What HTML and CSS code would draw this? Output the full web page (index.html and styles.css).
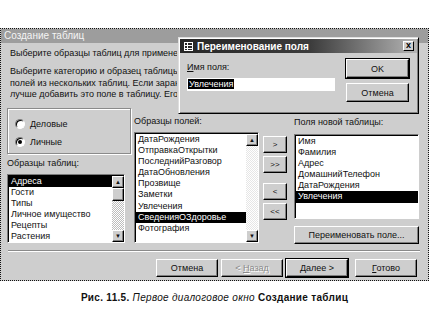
FILE: index.html
```html
<!DOCTYPE html>
<html lang="ru">
<head>
  <meta charset="UTF-8" />
  <title>Создание таблиц</title>
  <link rel="stylesheet" href="styles.css">
</head>
<body>
  <div class="page">
    <div class="wizard">
      <div class="wiz-title">Создание таблиц</div>
      <p class="lead">Выберите образцы таблиц для применения</p>
      <p class="hint">
        <span>Выберите категорию и образец таблицы</span>
        <span>полей из нескольких таблиц. Если заранее</span>
        <span>лучше добавить это поле в таблицу. Его</span>
      </p>

      <div class="main">
        <div class="col-left">
          <div class="groupbox">
            <label class="radio"><span class="dot"></span>Деловые</label>
            <label class="radio"><span class="dot on"></span>Личные</label>
          </div>
          <div class="caption-label">Образцы таблиц:</div>
          <div class="listbox list-tables">
            <ul class="items">
              <li class="sel">Адреса</li>
              <li>Гости</li>
              <li>Типы</li>
              <li>Личное имущество</li>
              <li>Рецепты</li>
              <li>Растения</li>
            </ul>
            <div class="scrollbar">
              <div class="sb-btn">&#9650;</div>
              <div class="sb-thumb"></div>
              <div class="sb-track"></div>
              <div class="sb-btn">&#9660;</div>
            </div>
          </div>
        </div>

        <div class="col-fields">
          <div class="caption-label">Образцы полей:</div>
          <div class="listbox list-fields">
            <ul class="items">
              <li>ДатаРождения</li>
              <li>ОтправкаОткрытки</li>
              <li>ПоследнийРазговор</li>
              <li>ДатаОбновления</li>
              <li>Прозвище</li>
              <li>Заметки</li>
              <li>Увлечения</li>
              <li class="sel">СведенияОЗдоровье</li>
              <li>Фотография</li>
            </ul>
            <div class="scrollbar">
              <div class="sb-btn">&#9650;</div>
              <div class="sb-track light"></div>
              <div class="sb-btn">&#9660;</div>
            </div>
          </div>
        </div>

        <div class="col-arrows">
          <button class="btn arrow">&gt;</button>
          <button class="btn arrow">&gt;&gt;</button>
          <button class="btn arrow gap">&lt;</button>
          <button class="btn arrow">&lt;&lt;</button>
        </div>

        <div class="col-new">
          <div class="caption-label">Поля новой таблицы:</div>
          <div class="listbox list-new">
            <ul class="items">
              <li>Имя</li>
              <li>Фамилия</li>
              <li>Адрес</li>
              <li>ДомашнийТелефон</li>
              <li>ДатаРождения</li>
              <li class="sel">Увлечения</li>
            </ul>
          </div>
          <button class="btn rename-btn">Переименовать поле...</button>
        </div>
      </div>

      <div class="separator"></div>

      <div class="footer">
        <button class="btn wide">Отмена</button>
        <button class="btn wide disabled">&lt; <u>Н</u>азад</button>
        <button class="btn wide default"><u>Д</u>алее &gt;</button>
        <button class="btn wide last"><u>Г</u>отово</button>
      </div>

      <div class="rename">
        <div class="rn-title">
          <svg class="rn-icon" width="9" height="9" viewBox="0 0 9 9">
            <rect x="0.5" y="0.5" width="8" height="8" fill="none" stroke="#fff"/>
            <path d="M0 3.5H9M0 6.5H9M3.5 0V9" stroke="#fff"/>
          </svg>
          <span>Переименование поля</span>
          <span class="rn-close">x</span>
        </div>
        <div class="rn-body">
          <div class="rn-field">
            <div class="rn-label"><u>И</u>мя поля:</div>
            <div class="rn-input"><span class="rn-sel">Увлечения</span></div>
          </div>
          <div class="rn-buttons">
            <button class="btn rn-btn default">OK</button>
            <button class="btn rn-btn">Отмена</button>
          </div>
        </div>
      </div>
    </div>

    <p class="figure"><b>Рис. 11.5.</b> <i>Первое диалоговое окно</i> <b>Создание таблиц</b></p>
  </div>
</body>
</html>
```

FILE: styles.css
```css
body {
  margin: 0;
  background: #ffffff;
  font-family: 'Liberation Sans', Arial, sans-serif;
  font-size: 9px;
  color: #111;
}
.page {
  width: 429px;
  padding-top: 28px;
}
.wizard {
  position: relative;
  box-sizing: border-box;
  width: 429px;
  height: 253px;
  border: 1px dotted #111;
  background: #cecece;
}
.wiz-title {
  height: 14px;
  line-height: 14px;
  padding-left: 3px;
  background: #9d9d9d;
  color: #f4f4f4;
  font-size: 10px;
}
.lead,
.hint {
  width: 167px;
  overflow: hidden;
}
.lead {
  margin: 4px 0 0 9px;
  line-height: 12px;
  white-space: nowrap;
}
.hint {
  margin: 7px 0 0 9px;
  line-height: 11.5px;
}
.hint span {
  display: block;
  white-space: nowrap;
}
.main {
  display: flex;
  align-items: flex-start;
  padding-left: 6px;
}
.col-left {
  width: 124px;
}
.groupbox {
  box-sizing: border-box;
  height: 46px;
  margin-top: 7px;
  padding: 9px 0 0 7px;
  border: 1px solid #8a8a8a;
  box-shadow: 1px 1px 0 #fff, inset 1px 1px 0 #fff;
  display: flex;
  flex-direction: column;
  gap: 6px;
}
.radio {
  display: flex;
  align-items: center;
  height: 12px;
  gap: 5px;
}
.dot {
  box-sizing: border-box;
  width: 10px;
  height: 10px;
  border-radius: 50%;
  border: 1px solid #7a7a7a;
  border-right-color: #fff;
  border-bottom-color: #fff;
  background: #fff;
  box-shadow: inset 1px 1px 0 #000;
  position: relative;
}
.dot.on::after {
  content: "";
  position: absolute;
  left: 2px;
  top: 2px;
  width: 4px;
  height: 4px;
  border-radius: 50%;
  background: #000;
}
.caption-label {
  line-height: 12px;
  margin-top: 3px;
  white-space: nowrap;
}
.col-fields .caption-label {
  margin-top: 14px;
}
.col-new .caption-label {
  margin-top: 15px;
}
.listbox {
  box-sizing: border-box;
  display: flex;
  background: #fff;
  border: 1px solid;
  border-color: #7a7a7a #fff #fff #7a7a7a;
  box-shadow: inset 1px 1px 0 #000;
  padding: 1px 0 0 1px;
  overflow: hidden;
}
.list-tables {
  width: 118px;
  height: 69px;
  margin-top: 5px;
}
.list-fields {
  width: 125px;
  height: 111px;
  margin-top: 5px;
}
.list-new {
  width: 125px;
  height: 85px;
  margin-top: 6px;
}
.items {
  flex: 1;
  list-style: none;
  margin: 0;
  padding: 0;
  min-width: 0;
}
.items li {
  line-height: 11.2px;
  height: 11.2px;
  padding-left: 2px;
  white-space: nowrap;
  overflow: hidden;
}
.items li.sel {
  background: #000;
  color: #fff;
}
.scrollbar {
  width: 12px;
  display: flex;
  flex-direction: column;
}
.sb-btn,
.sb-thumb {
  box-sizing: border-box;
  height: 12px;
  background: #cecece;
  border: 1px solid;
  border-color: #fff #000 #000 #fff;
  box-shadow: inset -1px -1px 0 #808080;
  font-size: 6px;
  line-height: 10px;
  text-align: center;
}
.sb-thumb {
  height: 13px;
}
.sb-track {
  flex: 1;
  background: repeating-conic-gradient(#fff 0 25%, #bdbdbd 0 50%) 0 0 / 2px 2px;
}
.sb-track.light {
  background: repeating-conic-gradient(#fff 0 25%, #e6e6e6 0 50%) 0 0 / 2px 2px;
}
.col-fields {
  width: 125px;
  margin-left: 3px;
}
.col-arrows {
  width: 24px;
  margin-left: 4px;
  margin-top: 35px;
  display: flex;
  flex-direction: column;
  gap: 3px;
}
.col-new {
  width: 125px;
  margin-left: 7px;
}
.btn {
  box-sizing: border-box;
  margin: 0;
  padding: 0;
  font-family: inherit;
  font-size: 9px;
  color: #111;
  background: #cecece;
  border: 1px solid;
  border-color: #fff #000 #000 #fff;
  box-shadow: inset -1px -1px 0 #808080;
  text-align: center;
}
.btn.default {
  outline: 1px solid #000;
}
.btn.disabled {
  color: #8a8a8a;
  text-shadow: 1px 1px 0 #fff;
}
.arrow {
  height: 17px;
  font-size: 8px;
}
.arrow.gap {
  margin-top: 7px;
}
.rename-btn {
  display: block;
  width: 125px;
  height: 18px;
  margin-top: 7px;
}
.separator {
  margin: 6px 8px 0 7px;
  height: 0;
  border-top: 1px solid #8a8a8a;
  border-bottom: 1px solid #fff;
}
.footer {
  display: flex;
  justify-content: flex-end;
  gap: 3px;
  margin-top: 7px;
  padding-right: 11px;
}
.wide {
  width: 62px;
  height: 18px;
}
.wide.last {
  margin-left: 4px;
}

/* диалог поверх мастера */
.rename {
  position: absolute;
  left: 177px;
  top: 8px;
  box-sizing: border-box;
  width: 241px;
  height: 77px;
  padding: 1px;
  background: #cecece;
  border: 1px solid;
  border-color: #dedede #000 #000 #dedede;
  box-shadow: inset 1px 1px 0 #fff, inset -1px -1px 0 #808080;
}
.rn-title {
  display: flex;
  align-items: center;
  height: 14px;
  padding-left: 4px;
  background: linear-gradient(to right, #262626 0%, #3c3c3c 55%, #b4b4b4 100%);
  color: #fff;
  font-size: 10px;
  font-weight: bold;
}
.rn-icon {
  margin-right: 4px;
}
.rn-close {
  box-sizing: border-box;
  margin-left: auto;
  margin-right: 3px;
  width: 11px;
  height: 10px;
  line-height: 7px;
  text-align: center;
  font-size: 9px;
  color: #000;
  background: #cecece;
  border: 1px solid;
  border-color: #fff #000 #000 #fff;
}
.rn-body {
  display: flex;
  padding: 0 8px 0 7px;
}
.rn-field {
  width: 148px;
}
.rn-label {
  margin-top: 8px;
  line-height: 12px;
}
.rn-input {
  box-sizing: border-box;
  height: 13px;
  margin-top: 5px;
  background: #fff;
  line-height: 13px;
  padding-left: 1px;
}
.rn-sel {
  background: #000;
  color: #fff;
  padding: 0 1px;
}
.rn-buttons {
  margin-left: auto;
  display: flex;
  flex-direction: column;
  gap: 5px;
  padding-top: 6px;
}
.rn-btn {
  width: 63px;
  height: 19px;
}

.figure {
  margin: 10px 0 0;
  text-align: center;
  font-size: 10px;
  line-height: 14px;
  letter-spacing: 0.3px;
}
.figure i {
  font-weight: normal;
}
```
